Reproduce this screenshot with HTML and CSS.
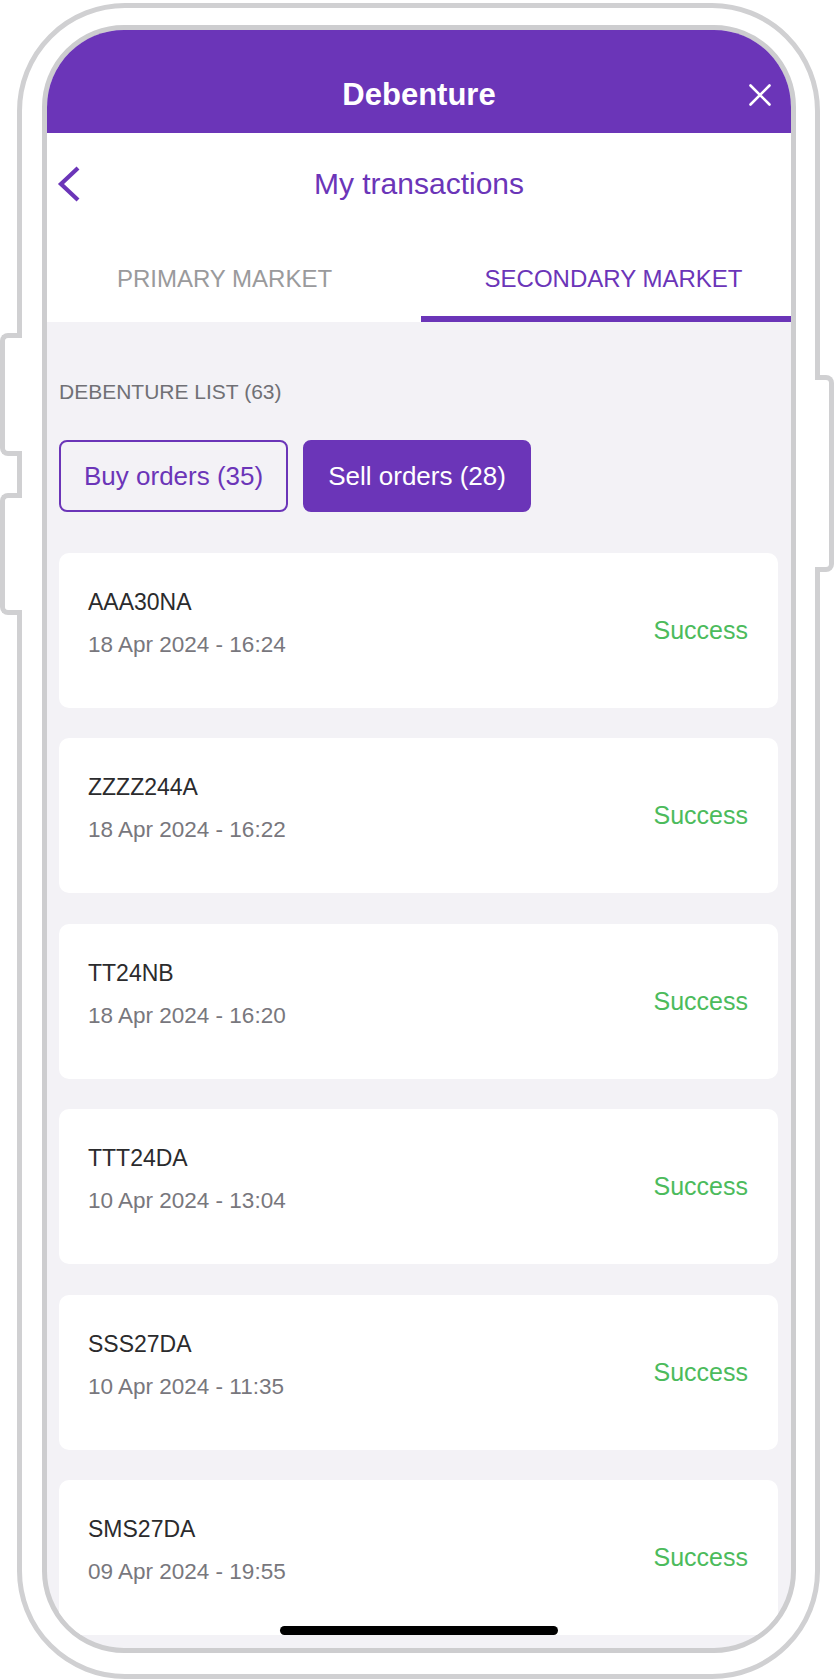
FILE: index.html
```html
<!DOCTYPE html>
<html lang="en">
<head>
    <meta charset="UTF-8">
    <meta name="viewport" content="width=device-width, initial-scale=1.0">
    <title>Debenture - My transactions</title>
    <link rel="stylesheet" href="styles.css">
</head>
<body>

    <div class="device">
        <!-- botões laterais do aparelho -->
        <span class="side-btn side-left side-first"></span>
        <span class="side-btn side-left side-second"></span>
        <span class="side-btn side-right"></span>

        <div class="screen">
            <header class="top-bar">
                <span></span>
                <h1>Debenture</h1>
                <button class="close-btn" aria-label="Close">
                    <svg width="22" height="22" viewBox="0 0 22 22">
                        <path d="M1.5 1.5 L20.5 20.5 M20.5 1.5 L1.5 20.5" stroke="#fff" stroke-width="2.6" stroke-linecap="round" fill="none"/>
                    </svg>
                </button>
            </header>

            <div class="nav">
                <div class="nav-row">
                    <button class="back-btn" aria-label="Back">
                        <svg width="24" height="38" viewBox="0 0 24 38">
                            <path d="M21 3 L4 19 L21 35" stroke="#6b35b8" stroke-width="4.2" fill="none"/>
                        </svg>
                    </button>
                    <h2>My transactions</h2>
                    <span></span>
                </div>
                <div class="tabs">
                    <div class="tab tab-primary">PRIMARY MARKET</div>
                    <div class="tab tab-secondary active">SECONDARY MARKET</div>
                </div>
            </div>

            <main class="content">
                <p class="list-title">DEBENTURE LIST (63)</p>

                <div class="filters">
                    <button class="filter-btn">Buy orders (35)</button>
                    <button class="filter-btn selected">Sell orders (28)</button>
                </div>

                <ul class="order-list">
                    <li class="order-item">
                        <div class="order-info">
                            <span class="order-code">AAA30NA</span>
                            <span class="order-date">18 Apr 2024 - 16:24</span>
                        </div>
                        <span class="order-status">Success</span>
                    </li>
                    <li class="order-item">
                        <div class="order-info">
                            <span class="order-code">ZZZZ244A</span>
                            <span class="order-date">18 Apr 2024 - 16:22</span>
                        </div>
                        <span class="order-status">Success</span>
                    </li>
                    <li class="order-item">
                        <div class="order-info">
                            <span class="order-code">TT24NB</span>
                            <span class="order-date">18 Apr 2024 - 16:20</span>
                        </div>
                        <span class="order-status">Success</span>
                    </li>
                    <li class="order-item">
                        <div class="order-info">
                            <span class="order-code">TTT24DA</span>
                            <span class="order-date">10 Apr 2024 - 13:04</span>
                        </div>
                        <span class="order-status">Success</span>
                    </li>
                    <li class="order-item">
                        <div class="order-info">
                            <span class="order-code">SSS27DA</span>
                            <span class="order-date">10 Apr 2024 - 11:35</span>
                        </div>
                        <span class="order-status">Success</span>
                    </li>
                    <li class="order-item">
                        <div class="order-info">
                            <span class="order-code">SMS27DA</span>
                            <span class="order-date">09 Apr 2024 - 19:55</span>
                        </div>
                        <span class="order-status">Success</span>
                    </li>
                </ul>
            </main>

            <div class="home-bar"></div>
        </div>
    </div>

</body>
</html>
```

FILE: styles.css
```css
* {
    box-sizing: border-box;
}
body {
    margin: 0;
    padding: 0;
    background-color: #fff;
    font-family: "Liberation Sans", Arial, sans-serif;
}
button {
    font-family: inherit;
    background: none;
    border: none;
    padding: 0;
    cursor: pointer;
}

/* moldura do aparelho */
.device {
    position: relative;
    margin: 3px 0 0 17px;
    width: 803px;
    height: 1676px;
    border: 5px solid #d0d0d2;
    border-radius: 108px;
    padding: 17px 19px 21px 20px;
    background-color: #fff;
}
.side-btn {
    position: absolute;
    background-color: #fff;
    border: 5px solid #d0d0d2;
}
.side-left {
    left: -22px;
    width: 22px;
    border-right: none;
    border-radius: 8px 0 0 8px;
}
.side-first {
    top: 325px;
    height: 123px;
}
.side-second {
    top: 485px;
    height: 122px;
}
.side-right {
    right: -19px;
    width: 19px;
    top: 367px;
    height: 197px;
    border-left: none;
    border-radius: 0 8px 8px 0;
}
.screen {
    position: relative;
    height: 100%;
    border: 5px solid #cdcdcf;
    border-radius: 82px;
    overflow: hidden;
    background-color: #f3f2f6;
    display: flex;
    flex-direction: column;
}

/* barra roxa */
.top-bar {
    display: grid;
    grid-template-columns: 1fr auto 1fr;
    align-items: center;
    background-color: #6b35b8;
    padding: 47px 0 21px;
}
.top-bar h1 {
    margin: 0;
    color: #fff;
    font-size: 31px;
    line-height: 35px;
    font-weight: bold;
}
.close-btn {
    justify-self: end;
    margin-right: 20px;
    width: 22px;
    height: 22px;
    display: flex;
}

/* navegação */
.nav {
    background-color: #fff;
}
.nav-row {
    display: grid;
    grid-template-columns: 1fr auto 1fr;
    align-items: center;
    padding: 32px 0 27px;
}
.back-btn {
    justify-self: start;
    margin-left: 10px;
    width: 24px;
    height: 38px;
    display: flex;
}
.nav-row h2 {
    margin: 0;
    color: #6b35b8;
    font-size: 30px;
    line-height: 36px;
    font-weight: normal;
}
.tabs {
    display: flex;
}
.tab {
    flex: 1;
    text-align: center;
    font-size: 24px;
    line-height: 28px;
    color: #9a9a9c;
    padding: 35px 0 23px;
    border-bottom: 6px solid transparent;
}
.tab-primary {
    padding-right: 19px;
}
.tab-secondary {
    padding-left: 15px;
}
.tab.active {
    color: #6b35b8;
    border-bottom-color: #6b35b8;
}

/* lista */
.content {
    padding: 58px 13px 0 12px;
}
.list-title {
    margin: 0 0 36px;
    font-size: 21px;
    line-height: 24px;
    color: #707075;
}
.filters {
    display: flex;
    gap: 15px;
    margin-bottom: 41px;
}
.filter-btn {
    height: 72px;
    padding: 0 23px;
    border: 2px solid #6b35b8;
    border-radius: 8px;
    font-size: 26px;
    color: #6b35b8;
}
.filter-btn.selected {
    background-color: #6b35b8;
    color: #fff;
}
.order-list {
    list-style-type: none;
    margin: 0;
    padding: 0;
    display: flex;
    flex-direction: column;
    gap: 30.4px;
}
.order-item {
    height: 155px;
    background-color: #fff;
    border-radius: 10px;
    padding: 0 30px 0 29px;
    display: flex;
    justify-content: space-between;
    align-items: center;
}
.order-info {
    align-self: flex-start;
    padding-top: 35px;
    display: flex;
    flex-direction: column;
    gap: 15px;
}
.order-code {
    font-size: 23px;
    line-height: 28px;
    color: #2b2b2d;
}
.order-date {
    font-size: 22.5px;
    line-height: 28px;
    color: #78777d;
}
.order-status {
    font-size: 25px;
    color: #4cbb5c;
}
.home-bar {
    position: absolute;
    bottom: 13px;
    left: 50%;
    transform: translateX(-50%);
    width: 278px;
    height: 9px;
    border-radius: 5px;
    background-color: #000;
}
```
